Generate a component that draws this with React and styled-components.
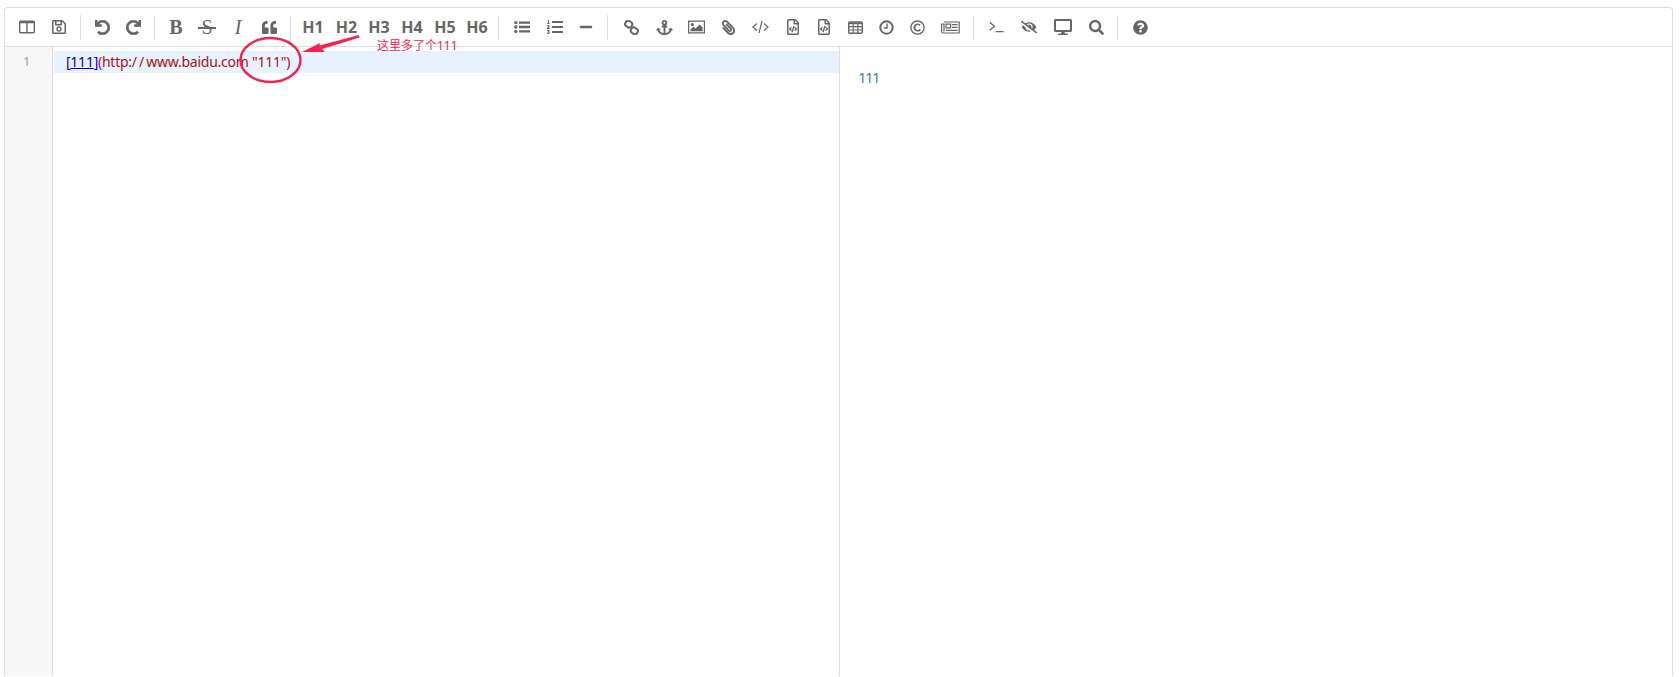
import styled, { createGlobalStyle } from "styled-components";
import {
  FaUndo,
  FaRedo,
  FaQuoteLeft,
  FaListOl,
  FaMinus,
  FaAnchor,
  FaPaperclip,
  FaEyeSlash,
  FaDesktop,
  FaSearch,
  FaQuestionCircle,
  FaRegSave,
  FaRegFileCode,
  FaRegCopyright,
} from "react-icons/fa";

const GlobalStyle = createGlobalStyle`
  html, body {
    margin: 0;
    background: #fff;
    overflow: hidden;
  }
`;

function ColumnsIcon() {
  return (
    <svg width="16" height="14" viewBox="0 0 16 14" fill="none" stroke="#666" strokeWidth="1.4">
      <rect x="0.7" y="1.2" width="14.6" height="11.6" rx="1" />
      <path d="M8 1.2v11.6M0.7 2.6h14.6" />
    </svg>
  );
}

function ListIcon() {
  return (
    <svg width="16" height="14" viewBox="0 0 16 14" fill="#666">
      <circle cx="1.8" cy="2.6" r="1.7" />
      <circle cx="1.8" cy="7" r="1.7" />
      <circle cx="1.8" cy="11.4" r="1.7" />
      <path d="M5 1.4h11v2.4H5zM5 5.8h11v2.4H5zM5 10.2h11v2.4H5z" />
    </svg>
  );
}

function LinkIcon() {
  return (
    <svg width="15" height="15" viewBox="0 0 15 15" fill="none" stroke="#666" strokeWidth="2">
      <rect x="1.2" y="1.2" width="7" height="6" rx="2.6" transform="rotate(35 4.7 4.2)" />
      <rect x="6.8" y="7.8" width="7" height="6" rx="2.6" transform="rotate(35 10.3 10.8)" />
    </svg>
  );
}

function ImageIcon() {
  return (
    <svg width="17" height="14" viewBox="0 0 17 14" fill="#666">
      <path d="M0 0.5h17v13H0zM1.2 1.7v10.6h14.6V1.7z" fillRule="evenodd" />
      <circle cx="4.4" cy="4.6" r="1.6" />
      <path d="M2.4 11.2V9.4l3-2.6 2.2 1.8 4-4.2 3 3.2v3.6z" />
    </svg>
  );
}

function CodeIcon() {
  return (
    <svg width="17" height="14" viewBox="0 0 17 14" fill="none" stroke="#666" strokeWidth="1.2">
      <path d="M5 3.5 1 7l4 3.5M12 3.5 16 7l-4 3.5M10 1 7 13" />
    </svg>
  );
}

function TableIcon() {
  return (
    <svg width="15" height="13" viewBox="0 0 15 13" fill="none" stroke="#666">
      <rect x="0.7" y="0.9" width="13.6" height="11.4" rx="1" strokeWidth="1.4" />
      <path d="M0.7 2.2h13.6" strokeWidth="2" />
      <path d="M0.7 5.7h13.6M0.7 9h13.6M5.2 2v10M9.8 2v10" strokeWidth="1.2" />
    </svg>
  );
}

function ClockIcon() {
  return (
    <svg width="15" height="15" viewBox="0 0 15 15" fill="none" stroke="#666">
      <circle cx="7.5" cy="7.5" r="6.2" strokeWidth="2" />
      <path d="M8 3.6v4.4H4.8" strokeWidth="1.4" />
    </svg>
  );
}

function NewsIcon() {
  return (
    <svg width="19" height="13" viewBox="0 0 19 13" fill="none" stroke="#666">
      <path d="M3 1h15.2v11H2a1.4 1.4 0 0 1-1.4-1.4V3H3v7.5" strokeWidth="1.2" />
      <path d="M5 3.2h4.6v3.6H5zM11 3.6h5.6M11 6.4h5.6M5 9.4h11.6" strokeWidth="1.2" />
    </svg>
  );
}

function TerminalIcon() {
  return (
    <svg width="15" height="12" viewBox="0 0 15 12" fill="none" stroke="#666" strokeWidth="1.3">
      <path d="M0.8 1.2 5.4 5.2 0.8 9.2M6.6 10.6h8" />
    </svg>
  );
}

const headings = [
  ["H1", 34],
  ["H2", 33],
  ["H3", 32],
  ["H4", 34],
  ["H5", 32],
  ["H6", 32],
];

export default function App() {
  return (
    <>
      <GlobalStyle />
      <Page>
        <Editor>
          <Toolbar>
            <ToolButton $w={32}><ColumnsIcon /></ToolButton>
            <ToolButton $w={32}><FaRegSave size={16} /></ToolButton>
            <Divider />
            <ToolButton $w={32}><UndoIcon size={15} /></ToolButton>
            <ToolButton $w={31}><RedoIcon size={15} /></ToolButton>
            <Divider />
            <ToolButton $w={32}><GlyphB>B</GlyphB></ToolButton>
            <ToolButton $w={30}><GlyphS>S</GlyphS></ToolButton>
            <ToolButton $w={32}><GlyphI>I</GlyphI></ToolButton>
            <ToolButton $w={31}><FaQuoteLeft size={15} /></ToolButton>
            <Divider />
            {headings.map(([h, w]) => (
              <ToolButton key={h} $w={w}><Heading>{h}</Heading></ToolButton>
            ))}
            <Divider />
            <ToolButton $w={36}><ListIcon /></ToolButton>
            <ToolButton $w={30}><FaListOl size={16} /></ToolButton>
            <ToolButton $w={32}><FaMinus size={14} /></ToolButton>
            <Divider />
            <ToolButton $w={36}><LinkIcon /></ToolButton>
            <ToolButton $w={30}><FaAnchor size={17} /></ToolButton>
            <ToolButton $w={34}><ImageIcon /></ToolButton>
            <ToolButton $w={30}><ClipIcon size={15} /></ToolButton>
            <ToolButton $w={34}><CodeIcon /></ToolButton>
            <ToolButton $w={32}><FaRegFileCode size={16} /></ToolButton>
            <ToolButton $w={29}><FaRegFileCode size={16} /></ToolButton>
            <ToolButton $w={34}><TableIcon /></ToolButton>
            <ToolButton $w={29}><ClockIcon /></ToolButton>
            <ToolButton $w={32}><FaRegCopyright size={15} /></ToolButton>
            <ToolButton $w={35}><NewsIcon /></ToolButton>
            <Divider />
            <ToolButton $w={34}><TerminalIcon /></ToolButton>
            <ToolButton $w={32}><FaEyeSlash size={16} /></ToolButton>
            <ToolButton $w={35}><FaDesktop size={18} /></ToolButton>
            <ToolButton $w={32}><FaSearch size={15} /></ToolButton>
            <Divider />
            <ToolButton $w={34}><FaQuestionCircle size={15} /></ToolButton>
          </Toolbar>
          <Body>
            <Gutter>
              <LineNumber>1</LineNumber>
            </Gutter>
            <Source>
              <ActiveLine>
                <Bracket>[</Bracket>
                <LinkText>111</LinkText>
                <Bracket>]</Bracket>
                <Url>(http:<Slashes>//</Slashes>www.baidu.com "111")</Url>
              </ActiveLine>
            </Source>
            <Preview>
              <PreviewLink>111</PreviewLink>
            </Preview>
          </Body>
        </Editor>
        <Annotation viewBox="0 0 240 60" fill="none">
          <ellipse cx="39.5" cy="30" rx="30" ry="22" stroke="#f5214f" strokeWidth="2.4" />
          <path d="M71 22 89 13 88.5 15.5 128 5 128.5 7.5 91 19 94 22z" fill="#f5214f" />
        </Annotation>
        <Note>这里多了个111</Note>
      </Page>
    </>
  );
}

const Page = styled.div`
  position: relative;
  box-sizing: border-box;
  height: 677px;
  padding: 7px 6px 1px 4px;
`;

const Editor = styled.div`
  box-sizing: border-box;
  height: 100%;
  display: flex;
  flex-direction: column;
  border: 1px solid #ddd;
  border-bottom: none;
  border-radius: 4px 4px 0 0;
  font-family: "Noto Sans", "Noto Sans CJK SC", sans-serif;
`;

const Toolbar = styled.div`
  flex: none;
  box-sizing: border-box;
  height: 39px;
  padding: 0 0 0 6px;
  display: flex;
  align-items: center;
  border-bottom: 1px solid #ddd;
  color: #666;
`;

const ToolButton = styled.div`
  flex: none;
  width: ${(p) => p.$w}px;
  height: 26px;
  display: flex;
  align-items: center;
  justify-content: center;
`;

const UndoIcon = styled(FaUndo)`
  stroke: currentColor;
  stroke-width: 24px;
`;

const RedoIcon = styled(FaRedo)`
  stroke: currentColor;
  stroke-width: 24px;
`;

const ClipIcon = styled(FaPaperclip)`
  transform: scaleX(-1);
`;

const Divider = styled.div`
  flex: none;
  width: 1px;
  height: 25px;
  margin: 0 5px;
  background: #ddd;
`;

const Heading = styled.span`
  font-size: 16px;
  font-weight: 700;
  color: #666;
`;

const GlyphB = styled.span`
  font: 700 20px "Liberation Serif", serif;
`;

const GlyphS = styled.span`
  position: relative;
  font: 400 20px "Liberation Serif", serif;

  &::after {
    content: "";
    position: absolute;
    left: -3px;
    right: -3px;
    top: 50%;
    height: 1.5px;
    background: #666;
  }
`;

const GlyphI = styled.span`
  font: italic 400 20px "Liberation Serif", serif;
`;

const Body = styled.div`
  flex: 1;
  display: flex;
  min-height: 0;
`;

const Gutter = styled.div`
  flex: none;
  box-sizing: border-box;
  width: 48px;
  padding: 2px 22px 0 0;
  background: #f7f7f7;
  border-right: 1px solid #ddd;
  text-align: right;
`;

const LineNumber = styled.span`
  font-size: 12px;
  color: #999;
`;

const Source = styled.div`
  flex: none;
  box-sizing: border-box;
  width: 787px;
  padding: 4px 0 0 1px;
  border-right: 1px solid #ddd;
`;

const ActiveLine = styled.div`
  height: 22px;
  padding-left: 12px;
  background: #e8f2ff;
  font-size: 14px;
  line-height: 21px;
  letter-spacing: -0.25px;
  white-space: pre;
`;

const Bracket = styled.span`
  color: #00c;
`;

const LinkText = styled.span`
  color: #00c;
  text-decoration: underline;
`;

const Url = styled.span`
  color: #a11;
`;

const Slashes = styled.span`
  letter-spacing: 2px;
`;

const Preview = styled.div`
  flex: 1;
  padding: 19px 0 0 18px;
`;

const PreviewLink = styled.span`
  font-size: 15px;
  letter-spacing: -1.6px;
  color: #3f7fd0;
`;

const Annotation = styled.svg`
  position: absolute;
  left: 231px;
  top: 30px;
  width: 240px;
  height: 60px;
`;

const Note = styled.span`
  position: absolute;
  left: 377px;
  top: 38px;
  font: 12px/16px "Noto Sans", "Noto Sans CJK SC", sans-serif;
  color: #f5214f;
`;
